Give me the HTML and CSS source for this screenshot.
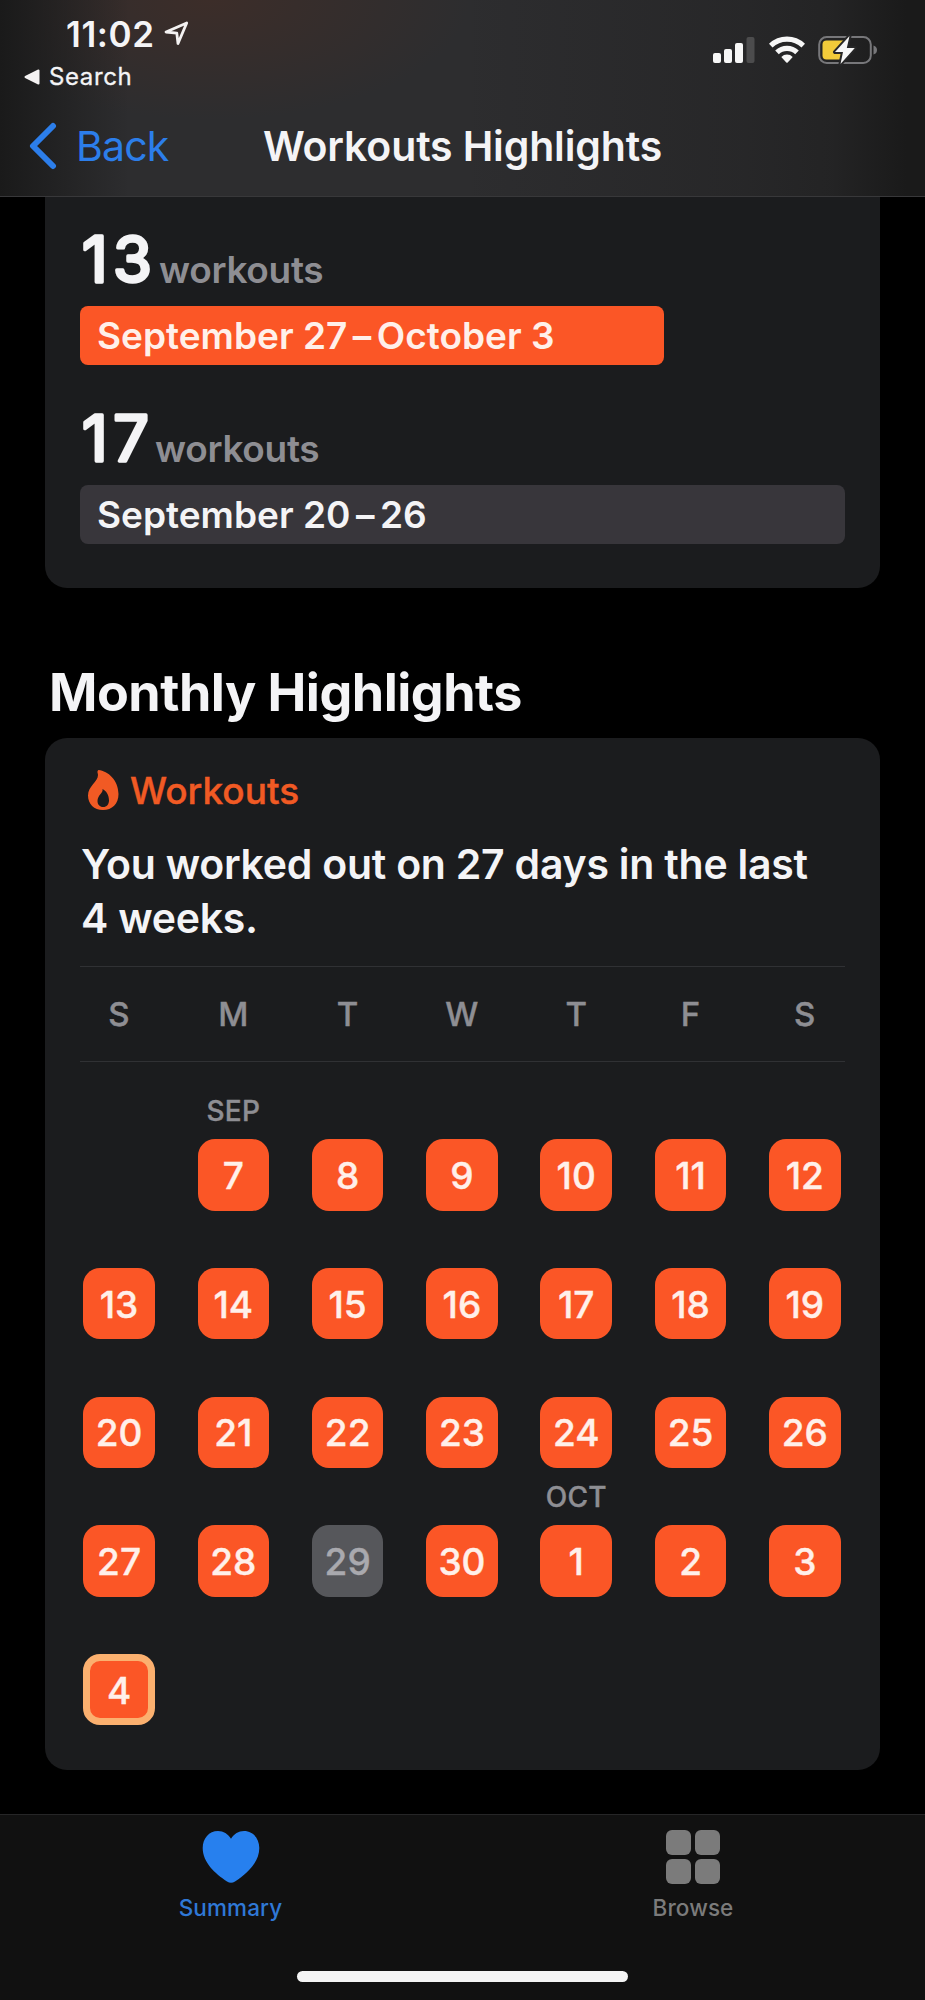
FILE: index.html
```html
<!DOCTYPE html>
<html lang="en">
<head>
<meta charset="utf-8">
<title>Workouts Highlights</title>
<link rel="stylesheet" href="styles.css">
</head>
<body>
<div class="screen">
  <header class="header">
    <div class="status">
      <div class="status-left">
        <div class="clock"><span class="clock-time">11:02</span>
          <svg class="location" width="25" height="25" viewBox="0 0 25 25"><path d="M2 11 22.700 2 14 22.500 12.800 12.200Z" fill="none" stroke="#f4f2f2" stroke-width="2.800" stroke-linejoin="round"/></svg>
        </div>
        <div class="return"><svg width="16" height="16" viewBox="0 0 16 16"><path d="M1.500 8 14.500 1.500V14.500Z" fill="#f4f2f2" stroke="#f4f2f2" stroke-width="2" stroke-linejoin="round"/></svg><span class="return-label">Search</span></div>
      </div>
      <div class="status-right">
        <svg width="42" height="28" viewBox="0 0 42 28"><g fill="#f7f7f7"><rect x="0" y="17" width="8" height="10" rx="2"/><rect x="11" y="13" width="8" height="14" rx="2"/><rect x="22" y="7" width="8" height="20" rx="2"/></g><rect x="33.500" y="1" width="8" height="26" rx="2" fill="#4c4c4d"/></svg>
        <svg width="36" height="28" viewBox="0 0 36 28"><g fill="none" stroke="#f7f7f7" stroke-width="5.200"><path d="M1.700 9.600A23.500 23.500 0 0 1 34.300 9.600"/><path d="M8 16.400A14.500 14.500 0 0 1 28 16.400"/></g><path d="M12.300 20.900A8.200 8.200 0 0 1 23.700 20.900L18.700 26.400Q18 27 17.300 26.400Z" fill="#f7f7f7"/></svg>
        <svg width="60" height="32" viewBox="0 0 60 32"><rect x="1.200" y="3" width="51.600" height="26" rx="7.500" fill="none" stroke="#77777a" stroke-width="2"/><path d="M55.500 11.500Q59 12.500 59 16T55.500 20.500Z" fill="#77777a"/><rect x="4.500" y="6.500" width="24" height="19" rx="4" fill="#f2cb3a"/><path d="M31.500 2 17 18H25L22.500 30 36.800 14H28.800Z" fill="#f7f7f7" stroke="#272728" stroke-width="4" stroke-linejoin="round" paint-order="stroke"/></svg>
      </div>
    </div>
    <nav class="nav">
      <a class="back"><svg width="28" height="48" viewBox="0 0 28 48"><path d="M24 4 4 24 24 44" fill="none" stroke="#2c7eea" stroke-width="6" stroke-linecap="round" stroke-linejoin="round"/></svg><span class="back-label">Back</span></a>
      <h1 class="title">Workouts Highlights</h1>
    </nav>
  </header>

  <main class="content">
    <section class="card card-weekly">
      <div class="stat">
        <svg class="stat-number" width="69" height="54" viewBox="0 0 69 54"><text x="0" y="49.500" textLength="70">13</text></svg>
        <span class="stat-unit">workouts</span>
      </div>
      <div class="bar bar-current"><span class="bar-label">September 27<span class="dash">–</span>October 3</span></div>
      <div class="stat stat-second">
        <svg class="stat-number" width="65" height="54" viewBox="0 0 65 54"><text x="0" y="49.500" textLength="67">17</text></svg>
        <span class="stat-unit">workouts</span>
      </div>
      <div class="bar"><span class="bar-label">September 20<span class="dash">–</span>26</span></div>
    </section>

    <h2 class="section-title">Monthly Highlights</h2>

    <section class="card card-monthly">
      <div class="category">
        <svg width="32" height="42" viewBox="0 0 32 42"><path fill-rule="evenodd" d="M11.500 1C21 2 31.500 11 31.500 25C31.500 35 25 41 16 41C7 41 1 35 1 26.500C1 17 11 13 11 6C11 4 9.500 2.500 11.500 1ZM15.500 20C16.500 24 10.500 26 10.500 32C10.500 35.500 12.800 38 16.200 38C19.800 38 22 35.300 22 31.500C22 26 19 21.500 15.500 20Z" fill="#f15a24"/></svg>
        <span class="category-label">Workouts</span>
      </div>
      <p class="summary">You worked out on 27 days in the last<br>4 weeks.</p>
      <div class="weekdays"><span>S</span><span>M</span><span>T</span><span>W</span><span>T</span><span>F</span><span>S</span></div>
      <div class="calendar">
        <div class="cell"></div>
        <div class="cell"><span class="month">SEP</span><span class="day">7</span></div>
        <div class="cell"><span class="day">8</span></div>
        <div class="cell"><span class="day">9</span></div>
        <div class="cell"><span class="day">10</span></div>
        <div class="cell"><span class="day">11</span></div>
        <div class="cell"><span class="day">12</span></div>
        <div class="cell"><span class="day">13</span></div>
        <div class="cell"><span class="day">14</span></div>
        <div class="cell"><span class="day">15</span></div>
        <div class="cell"><span class="day">16</span></div>
        <div class="cell"><span class="day">17</span></div>
        <div class="cell"><span class="day">18</span></div>
        <div class="cell"><span class="day">19</span></div>
        <div class="cell"><span class="day">20</span></div>
        <div class="cell"><span class="day">21</span></div>
        <div class="cell"><span class="day">22</span></div>
        <div class="cell"><span class="day">23</span></div>
        <div class="cell"><span class="day">24</span></div>
        <div class="cell"><span class="day">25</span></div>
        <div class="cell"><span class="day">26</span></div>
        <div class="cell"><span class="day">27</span></div>
        <div class="cell"><span class="day">28</span></div>
        <div class="cell"><span class="day day-missed">29</span></div>
        <div class="cell"><span class="day">30</span></div>
        <div class="cell"><span class="month">OCT</span><span class="day">1</span></div>
        <div class="cell"><span class="day">2</span></div>
        <div class="cell"><span class="day">3</span></div>
        <div class="cell"><span class="day day-today">4</span></div>
      </div>
    </section>
  </main>

  <footer class="tabbar">
    <div class="tabs">
      <a class="tab tab-active">
        <svg width="58" height="54" viewBox="0 0 58 54"><path d="M29 8.800C32 4 36.500 1 42 1C51 1 57.300 8.500 57.300 18C57.300 32.500 45 43.500 33 51.500Q29 54 25 51.500C13 43.500 .700 32.500 .700 18C.700 8.500 7 1 16 1C21.500 1 26 4 29 8.800Z" fill="#2780ee"/></svg>
        <span class="tab-label">Summary</span>
      </a>
      <a class="tab">
        <svg width="54" height="54" viewBox="0 0 54 54"><g fill="#7b7b7b"><rect width="25" height="25" rx="6"/><rect x="29" width="25" height="25" rx="6"/><rect y="29" width="25" height="25" rx="6"/><rect x="29" y="29" width="25" height="25" rx="6"/></g></svg>
        <span class="tab-label">Browse</span>
      </a>
    </div>
    <div class="home-indicator"></div>
  </footer>
</div>
</body>
</html>
```
FILE: styles.css
```css
* { box-sizing: border-box; }

body {
  margin: 0;
  background: #000;
  color: #f4f4f6;
  font-family: Inter, "Liberation Sans", sans-serif;
}

svg { display: block; flex: none; }

.screen {
  display: flex;
  flex-direction: column;
  width: 925px;
  height: 2000px;
  overflow: hidden;
}

/* Header */
.header {
  height: 197px;
  flex: none;
  border-bottom: 1px solid #38383a;
  background:
    linear-gradient(90deg, #1a1a1a 0, rgba(26, 26, 26, 0.65) 5%, rgba(26, 26, 26, 0) 14%, rgba(26, 26, 26, 0) 50%, rgba(26, 26, 26, 0.3) 80%, rgba(26, 26, 26, 0.5) 90%, #1a1a1a 98%),
    radial-gradient(ellipse 260px 120px at 210px 0, #3c2d29, rgba(60, 45, 41, 0)),
    #2d2d2f;
}

.status {
  display: flex;
  justify-content: space-between;
  height: 100px;
  padding: 14px 47px 0 24px;
}

.clock {
  display: flex;
  align-items: center;
  height: 41px;
  padding-left: 42px;
}

.clock-time {
  width: 98px;
  font-size: 35px;
  font-weight: 600;
  line-height: 41px;
  letter-spacing: 0.6px;
  white-space: nowrap;
}

.location { margin-bottom: 2px; }

.return {
  display: flex;
  align-items: center;
  gap: 9px;
  height: 43px;
}

.return-label {
  font-size: 24px;
  font-weight: 400;
  letter-spacing: 0.6px;
  -webkit-text-stroke: 0.3px currentColor;
}

.status-right {
  display: flex;
  align-items: center;
  gap: 13.5px;
  height: 72px;
}

.nav {
  display: grid;
  grid-template-columns: 1fr auto 1fr;
  align-items: center;
  height: 92px;
}

.back {
  display: flex;
  align-items: center;
  gap: 19px;
  padding-left: 29px;
  color: #2c7eea;
}

.back-label { font-size: 41px; letter-spacing: -0.8px; }

.title {
  margin: 0;
  font-size: 41px;
  font-weight: 600;
  letter-spacing: -0.15px;
}

/* Cards */
.content { flex: 1; padding: 0 45px; }

.card { background: #1b1c1e; padding: 0 35px; }

.card-weekly {
  height: 391px;
  padding-top: 34px;
  border-radius: 0 0 22px 22px;
}

.stat {
  display: flex;
  align-items: flex-end;
  gap: 8px;
  height: 55px;
}

.stat-second { margin-top: 45px; }

.stat-number {
  margin-left: 2px;
  overflow: visible;
}

.stat-number text {
  font-size: 63px;
  font-weight: 400;
  fill: #f4f4f6;
  stroke: #f4f4f6;
  stroke-width: 3.4px;
  stroke-linejoin: round;
}

.stat-unit {
  font-size: 37px;
  font-weight: 600;
  line-height: 32px;
  letter-spacing: -0.3px;
  color: #8e8e93;
}

.bar {
  display: flex;
  align-items: center;
  height: 59px;
  margin-top: 20px;
  padding-left: 17px;
  border-radius: 8px;
  background: #38363b;
}

.bar-current { width: 584px; background: #fb5626; color: #fff0ea; }

.bar-label {
  font-size: 37px;
  font-weight: 600;
  white-space: nowrap;
}

.dash { margin: 0 5.5px; }

.section-title {
  margin: 75px 0 15px 4px;
  font-size: 52px;
  font-weight: 700;
  line-height: 60px;
  letter-spacing: -0.5px;
  white-space: nowrap;
}

.card-monthly {
  height: 1032px;
  padding-top: 31px;
  border-radius: 22px;
}

.category {
  display: flex;
  align-items: center;
  gap: 11px;
  height: 42px;
  padding-left: 7px;
}

.category-label {
  font-size: 37px;
  font-weight: 500;
  color: #f15a24;
  -webkit-text-stroke: 0.4px currentColor;
}

.summary {
  margin: 27px 0 0 1px;
  font-size: 41px;
  font-weight: 600;
  line-height: 53.5px;
  letter-spacing: -0.24px;
  white-space: nowrap;
}

.weekdays {
  display: grid;
  grid-template-columns: repeat(7, 114.3px);
  align-items: center;
  height: 96px;
  margin-top: 21px;
  border-top: 1px solid #303134;
  border-bottom: 1px solid #303134;
  font-size: 33px;
  font-weight: 500;
  color: #8e8e93;
  -webkit-text-stroke: 0.4px currentColor;
}

.weekdays span { width: 78px; text-align: center; }

.calendar {
  display: grid;
  grid-template-columns: repeat(7, 114.3px);
  grid-auto-rows: 128.7px;
  padding-top: 20px;
}

.cell {
  display: flex;
  flex-direction: column;
  align-items: center;
  justify-content: flex-end;
  width: 71.5px;
  margin-left: 3.3px;
}

.month {
  margin-bottom: 13px;
  font-size: 28px;
  font-weight: 500;
  line-height: 30px;
  letter-spacing: 0.3px;
  color: #8e8e93;
  -webkit-text-stroke: 0.4px currentColor;
}

.day {
  display: flex;
  align-items: center;
  justify-content: center;
  flex: none;
  width: 71.5px;
  height: 71.5px;
  padding-top: 1px;
  border-radius: 17px;
  background: #fb5626;
  color: #fff0ea;
  font-size: 37px;
  font-weight: 500;
  -webkit-text-stroke: 0.4px currentColor;
}

.day-missed { background: #56575b; color: #a9a9ae; }

.day-today { border: 7px solid #fbb06f; }

/* Tab bar */
.tabbar {
  display: flex;
  flex-direction: column;
  align-items: center;
  justify-content: space-between;
  flex: none;
  height: 186px;
  padding: 15px 0 18px;
  border-top: 1px solid #262627;
  background: #111;
}

.tabs { display: grid; grid-template-columns: 461px 464px; }

.tab {
  display: flex;
  flex-direction: column;
  align-items: center;
  gap: 8px;
  color: #7b7b7b;
}

.tab-active { color: #2f78d6; }

.tab-label {
  font-size: 22.5px;
  font-weight: 500;
  line-height: 31px;
  letter-spacing: 0.1px;
}

.home-indicator {
  width: 331px;
  height: 11px;
  border-radius: 6px;
  background: #f4f4f4;
}
```
